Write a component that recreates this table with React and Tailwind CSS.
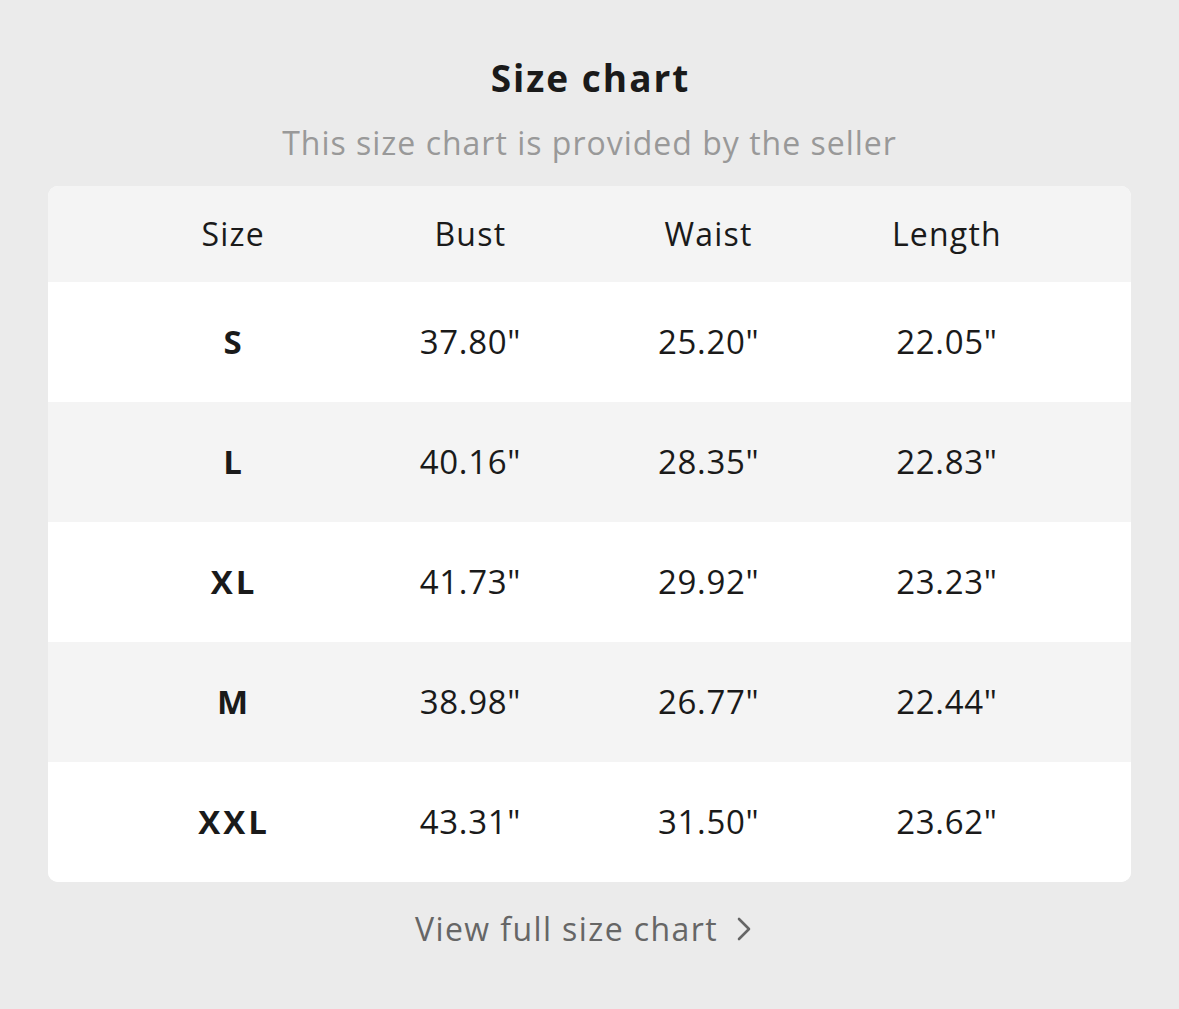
const rows = [
  { size: "S", bust: '37.80"', waist: '25.20"', length: '22.05"' },
  { size: "L", bust: '40.16"', waist: '28.35"', length: '22.83"' },
  { size: "XL", bust: '41.73"', waist: '29.92"', length: '23.23"' },
  { size: "M", bust: '38.98"', waist: '26.77"', length: '22.44"' },
  { size: "XXL", bust: '43.31"', waist: '31.50"', length: '23.62"' },
];

export default function App() {
  return (
    <div className="min-h-[1009px] bg-[#ebebeb] px-12 pt-[52px] text-[#1a1a1a] font-['Open_Sans',sans-serif]">
      <h1 className="pl-[2px] text-center text-[37px] font-bold leading-[52px] tracking-[2px]">Size chart</h1>
      <p className="mt-[19px] text-center text-[32px] leading-[40px] tracking-[1px] text-[#999999]">
        This size chart is provided by the seller
      </p>
      <div className="mt-[23px] overflow-hidden rounded-[10px] bg-white">
        <div className="grid h-[96px] grid-cols-4 items-center bg-[#f4f4f4] px-[65px] text-[32px] tracking-[1.2px]">
          <div className="pl-[2px] text-center">Size</div>
          <div className="text-center">Bust</div>
          <div className="text-center">Waist</div>
          <div className="text-center">Length</div>
        </div>
        {rows.map((r, i) => (
          <div
            key={r.size}
            className={`grid h-[120px] grid-cols-4 items-center px-[65px] text-[33px] tracking-[0.7px] ${i % 2 ? "bg-[#f4f4f4]" : "bg-white"}`}
          >
            <div className="pl-[4px] text-center font-bold tracking-[3px]">{r.size}</div>
            <div className="text-center">{r.bust}</div>
            <div className="text-center">{r.waist}</div>
            <div className="text-center">{r.length}</div>
          </div>
        ))}
      </div>
      <div className="mt-[27px] flex items-center justify-center gap-[18px] pr-[12px] text-[32px] leading-[40px] tracking-[1.4px] text-[#666666]">
        <span>View full size chart</span>
        <svg width="16" height="26" viewBox="0 0 16 26" fill="none" stroke="#666666" strokeWidth="2.6" strokeLinecap="round" strokeLinejoin="round">
          <path d="M3 3l10 10-10 10" />
        </svg>
      </div>
    </div>
  );
}
